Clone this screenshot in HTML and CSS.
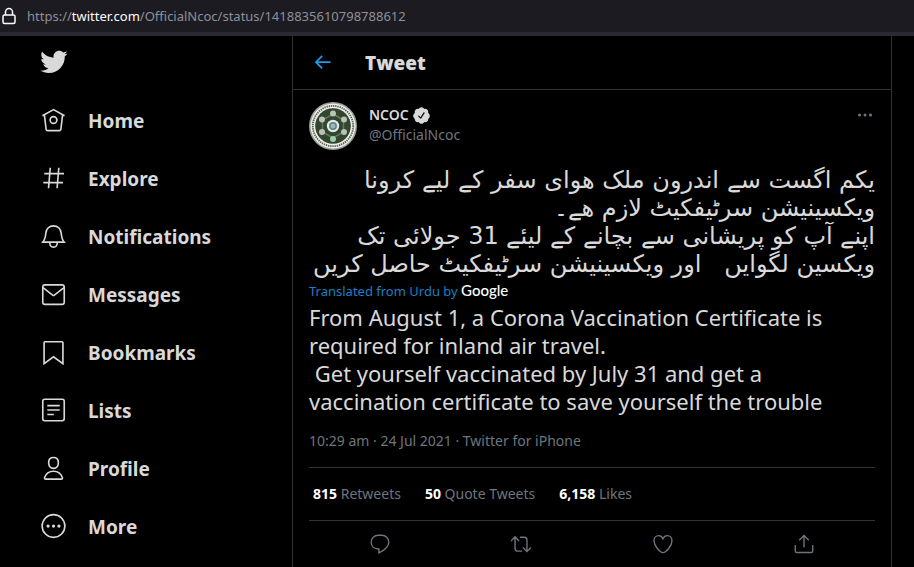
FILE: index.html
```html
<!DOCTYPE html>
<html lang="en">
<head>
    <meta charset="UTF-8">
    <meta name="viewport" content="width=device-width, initial-scale=1.0">
    <title>NCOC on Twitter</title>
    <link rel="stylesheet" href="styles.css">
</head>
<body>
    <div class="urlbar">
        <svg class="lock" viewBox="0 0 14 18" aria-hidden="true">
            <rect x="1" y="8" width="12" height="8.5" rx="1.5"/>
            <path d="M3.5 8V5a3.5 3.5 0 0 1 7 0v3"/>
        </svg>
        <span class="url">https://<b>twitter.com</b>/OfficialNcoc/status/1418835610798788612</span>
    </div>

    <div class="page">
        <header class="sidebar">
            <a class="logo" href="#" aria-label="Twitter">
                <svg viewBox="0 0 24 24"><path d="M23.643 4.937c-.835.37-1.732.62-2.675.733.962-.576 1.7-1.49 2.048-2.578-.9.534-1.897.922-2.958 1.13-.85-.904-2.06-1.47-3.4-1.47-2.572 0-4.658 2.086-4.658 4.66 0 .364.042.718.12 1.06-3.873-.195-7.304-2.05-9.602-4.868-.4.69-.63 1.49-.63 2.342 0 1.616.823 3.043 2.072 3.878-.764-.025-1.482-.234-2.11-.583v.06c0 2.257 1.605 4.14 3.737 4.568-.392.106-.803.162-1.227.162-.3 0-.593-.028-.877-.082.593 1.85 2.313 3.198 4.352 3.234-1.595 1.25-3.604 1.995-5.786 1.995-.376 0-.747-.022-1.112-.065 2.062 1.323 4.51 2.093 7.14 2.093 8.57 0 13.255-7.098 13.255-13.254 0-.2-.005-.402-.014-.602.91-.658 1.7-1.477 2.323-2.41z"/></svg>
            </a>
            <nav class="nav">
                <a href="#">
                    <svg viewBox="0 0 24 24"><path d="M1.8 8 12 2.4 22.2 8M3.6 7.2l1.6 13.4q.2 1.2 1.4 1.2h10.8q1.2 0 1.4-1.2l1.6-13.4"/><circle cx="12" cy="12" r="3.1"/></svg>
                    <span>Home</span>
                </a>
                <a href="#">
                    <svg viewBox="0 0 24 24"><path d="M9 2.5 7.4 21.5M16.9 2.5l-1.6 19M3.5 8h18.2M2.6 16.3h18.2"/></svg>
                    <span>Explore</span>
                </a>
                <a href="#">
                    <svg viewBox="0 0 24 24"><path d="M2.2 17.6c2.2-2.6 2.4-5.2 2.7-8.2C5.3 5.4 8.2 2.7 12 2.7s6.7 2.7 7.1 6.7c.3 3 .5 5.6 2.7 8.2zM8.4 18c.2 2.7 1.7 4.3 3.6 4.3s3.4-1.6 3.6-4.3"/></svg>
                    <span>Notifications</span>
                </a>
                <a href="#">
                    <svg viewBox="0 0 24 24"><rect x="2.1" y="3.6" width="19.8" height="18" rx="2"/><path d="m2.3 6.2 8.9 6.9q.8.6 1.6 0l8.9-6.9"/></svg>
                    <span>Messages</span>
                </a>
                <a href="#">
                    <svg viewBox="0 0 24 24"><path d="M3.3 22.8V3.4q0-.9.9-.9h15.6q.9 0 .9.9v19.4L12 16.5z"/></svg>
                    <span>Bookmarks</span>
                </a>
                <a href="#">
                    <svg viewBox="0 0 24 24"><rect x="2.1" y="2.1" width="19.8" height="19.8" rx="1.8"/><path d="M6.3 8h11.4M6.3 12h11.4M6.3 16.2h6"/></svg>
                    <span>Lists</span>
                </a>
                <a href="#">
                    <svg viewBox="0 0 24 24"><path d="M12 2.3c2.8 0 4.5 1.7 4.5 4.7 0 3.3-1.8 5.4-4.5 5.4S7.5 10.3 7.5 7c0-3 1.7-4.7 4.5-4.7zM12 15c-4 0-6.9 2-8.2 5.8-.3 1 .2 1.5 1 1.5h14.4c.8 0 1.3-.5 1-1.5C18.9 17 16 15 12 15z"/></svg>
                    <span>Profile</span>
                </a>
                <a href="#">
                    <svg viewBox="0 0 24 24"><circle cx="12" cy="12" r="10.5"/><g class="dots"><circle cx="7" cy="12" r="1.5"/><circle cx="12" cy="12" r="1.5"/><circle cx="17" cy="12" r="1.5"/></g></svg>
                    <span>More</span>
                </a>
            </nav>
        </header>

        <main class="timeline">
            <div class="title-bar">
                <button class="back" aria-label="Back">
                    <svg viewBox="0 0 24 24"><path d="M21 11H4M11 3.5 3.5 11l7.5 7.5"/></svg>
                </button>
                <h1>Tweet</h1>
            </div>

            <article class="tweet">
                <div class="author">
                    <svg class="avatar" viewBox="0 0 48 48" role="img" aria-label="NCOC">
                        <circle cx="24" cy="24" r="24" fill="#9aa098"/>
                        <circle cx="24" cy="24" r="22.5" fill="#eceee9"/>
                        <circle cx="24" cy="24" r="20.2" fill="none" stroke="#5b6357" stroke-width="1.8" stroke-dasharray="1.4 .8"/>
                        <circle cx="24" cy="24" r="17.8" fill="#34452f"/>
                        <path d="M24 12 34.5 18v12L24 36l-10.5-6V18z" fill="none" stroke="#62775c"/>
                        <circle cx="24" cy="24" r="6.2" fill="#e3e9e3"/>
                        <circle cx="24" cy="24" r="3.2" fill="#9db8b4" stroke="#5b8290"/>
                        <g fill="#b4c5b4">
                            <circle cx="24" cy="11.5" r="3"/>
                            <circle cx="35" cy="17.5" r="3"/>
                            <circle cx="35" cy="30" r="3"/>
                            <circle cx="24" cy="37" r="3" fill="#9ccdb0"/>
                            <circle cx="13" cy="30" r="3"/>
                            <circle cx="13" cy="17.5" r="3"/>
                        </g>
                    </svg>
                    <div class="names">
                        <a class="name" href="#">NCOC
                            <svg viewBox="0 0 24 24" aria-label="Verified account"><path d="M22.5 12.5c0-1.58-.875-2.95-2.148-3.6.154-.435.238-.905.238-1.4 0-2.21-1.71-3.998-3.818-3.998-.47 0-.92.084-1.336.25C14.818 2.415 13.51 1.5 12 1.5s-2.816.917-3.437 2.25c-.415-.165-.866-.25-1.336-.25-2.11 0-3.818 1.79-3.818 4 0 .494.083.964.237 1.4-1.272.65-2.147 2.018-2.147 3.6 0 1.495.782 2.798 1.942 3.486-.02.17-.032.34-.032.514 0 2.21 1.708 4 3.818 4 .47 0 .92-.086 1.335-.25.62 1.334 1.926 2.25 3.437 2.25 1.512 0 2.818-.916 3.437-2.25.415.163.865.248 1.336.248 2.11 0 3.818-1.79 3.818-4 0-.174-.012-.344-.033-.513 1.158-.687 1.943-1.99 1.943-3.484zm-6.616-3.334l-4.334 6.5c-.145.217-.382.334-.625.334-.143 0-.288-.04-.416-.126l-.115-.094-2.415-2.415c-.293-.293-.293-.768 0-1.06s.768-.294 1.06 0l1.77 1.767 3.825-5.74c.23-.345.696-.436 1.04-.207.346.23.44.696.21 1.04z"/></svg>
                        </a>
                        <a class="handle" href="#">@OfficialNcoc</a>
                    </div>
                    <button class="menu" aria-label="More options">
                        <svg viewBox="0 0 20 20"><circle cx="4.5" cy="10" r="1.5"/><circle cx="10" cy="10" r="1.5"/><circle cx="15.5" cy="10" r="1.5"/></svg>
                    </button>
                </div>

                <p class="text urdu" lang="ur" dir="rtl">یکم اگست سے اندرون ملک ھوای سفر کے لیے کرونا
ویکسینیشن سرٹیفکیٹ لازم ھے۔
اپنے آپ کو پریشانی سے بچانے کے لیئے 31 جولائی تک
ویکسین لگوایں   اور ویکسینیشن سرٹیفکیٹ حاصل کریں</p>
                <div class="translated"><a href="#">Translated from Urdu by</a> <span class="google">Google</span></div>
                <p class="text">From August 1, a Corona Vaccination Certificate is
required for inland air travel.
 Get yourself vaccinated by July 31 and get a
vaccination certificate to save yourself the trouble</p>

                <div class="meta">10:29 am · 24 Jul 2021 · <a href="#">Twitter for iPhone</a></div>

                <div class="stats">
                    <a href="#"><b>815</b> Retweets</a>
                    <a href="#"><b>50</b> Quote Tweets</a>
                    <a href="#"><b>6,158</b> Likes</a>
                </div>

                <div class="actions">
                    <button aria-label="Reply"><svg viewBox="0 0 24 24"><path d="M14 2.5H10C5.8 2.5 2.4 5.8 2.4 10c0 4.2 3.2 7.2 7.6 7.4h.8v4.4c4.7-2.4 10.8-6 10.8-11.8 0-4.2-3.4-7.5-7.6-7.5z"/></svg></button>
                    <button aria-label="Retweet"><svg viewBox="0 0 24 24"><path d="M1.2 8.7 5.5 4.2l4.3 4.5M5.5 4.7v12.1q0 3 3 3h4.7M22.8 15.8l-4.3 4.5-4.3-4.5M18.5 19.8V7.7q0-3-3-3h-4.7"/></svg></button>
                    <button aria-label="Like"><svg viewBox="0 0 24 24"><path d="M12 21.4C9 21.4 2.2 14.5 2.2 8.4 2.2 5.2 4.5 2.9 7.3 2.9c2.3 0 3.9 1.5 4.7 3.3.8-1.8 2.4-3.3 4.7-3.3 2.8 0 5.1 2.3 5.1 5.5 0 6.1-6.8 13-9.8 13z"/></svg></button>
                    <button aria-label="Share"><svg viewBox="0 0 24 24"><path d="M12 15.5V3M6.8 8 12 2.8 17.2 8M2.5 13v6.5q0 1.8 1.8 1.8h15.4q1.8 0 1.8-1.8V13"/></svg></button>
                </div>
            </article>
        </main>
    </div>
</body>
</html>
```

FILE: styles.css
```css
* {
    box-sizing: border-box;
}

body {
    margin: 0;
    min-height: 100vh;
    display: flex;
    flex-direction: column;
    background-color: #000;
    color: #d9d9d9;
    font-family: "Noto Sans", "Open Sans", sans-serif;
    font-size: 14px;
}

a {
    color: inherit;
    text-decoration: none;
}

button {
    padding: 0;
    border: none;
    background: none;
    color: inherit;
    cursor: pointer;
}

svg {
    display: block;
    fill: none;
    stroke: currentColor;
    stroke-width: 1.5;
}

.urlbar {
    display: flex;
    align-items: center;
    gap: 11px;
    height: 36px;
    padding: 0 2px;
    background-color: #1c1b22;
    border-bottom: 4px solid #2b2a33;
    color: #8f8f98;
    font-size: 13px;
}

.lock {
    width: 14px;
    height: 18px;
    color: #fbfbfe;
}

.url b {
    color: #fbfbfe;
    font-weight: normal;
}

.page {
    flex: 1;
    display: flex;
}

.sidebar {
    flex: 0 0 292px;
    padding: 11px 16px 0 39px;
}

.logo svg {
    width: 29px;
    height: 30px;
    fill: currentColor;
    stroke: none;
}

.nav {
    display: flex;
    flex-direction: column;
    padding-top: 15px;
}

.nav a {
    display: flex;
    align-items: center;
    gap: 20px;
    height: 58px;
    font-size: 19px;
    font-weight: bold;
}

.nav svg {
    width: 29px;
    height: 26px;
    margin-bottom: 3px;
}

.nav .dots {
    fill: currentColor;
    stroke: none;
}

.timeline {
    flex: 1;
    max-width: 600px;
    border: solid #2f3336;
    border-width: 0 1px;
}

.title-bar {
    display: flex;
    align-items: center;
    gap: 32px;
    height: 54px;
    padding: 0 20px;
    border-bottom: 1px solid #2f3336;
}

.title-bar h1 {
    margin: 0;
    font-family: "Open Sans", "Noto Sans", sans-serif;
    font-size: 19px;
    font-weight: 800;
}

.back {
    color: #1d9bf0;
}

.back svg {
    width: 20px;
    height: 20px;
    stroke-width: 2;
}

.tweet {
    padding: 12px 16px 0;
}

.author {
    display: flex;
    gap: 12px;
    margin-bottom: 16px;
}

.avatar {
    width: 48px;
    height: 48px;
    stroke: none;
}

.names {
    flex: 1;
    display: flex;
    flex-direction: column;
    padding-top: 3px;
    line-height: 20px;
}

.name {
    display: flex;
    align-items: center;
    gap: 3px;
    font-weight: 600;
}

.name svg {
    width: 19px;
    height: 19px;
    fill: currentColor;
    stroke: none;
}

.handle,
.meta,
.stats,
.menu,
.actions {
    color: #6e767d;
}

.menu {
    align-self: flex-start;
    padding-top: 3px;
}

.menu svg {
    width: 20px;
    height: 20px;
    fill: currentColor;
    stroke: none;
}

.text {
    margin: 0;
    font-size: 22px;
    line-height: 28px;
    white-space: pre-wrap;
}

.urdu {
    font-family: "DejaVu Sans", sans-serif;
    font-size: 24px;
}

.translated {
    color: #1d7fc4;
    font-size: 13px;
    line-height: 24px;
}

.google {
    color: #fff;
    font-family: Lato, sans-serif;
    font-size: 15px;
    font-weight: 500;
}

.meta {
    padding: 16px 0;
    line-height: 20px;
}

.stats {
    display: flex;
    gap: 24px;
    padding: 16px 4px;
    border: solid #2f3336;
    border-width: 1px 0;
    line-height: 20px;
}

.stats b {
    color: #fff;
}

.actions {
    display: flex;
    justify-content: space-around;
    padding: 12px 0;
}

.actions svg {
    width: 22px;
    height: 22px;
}
```
